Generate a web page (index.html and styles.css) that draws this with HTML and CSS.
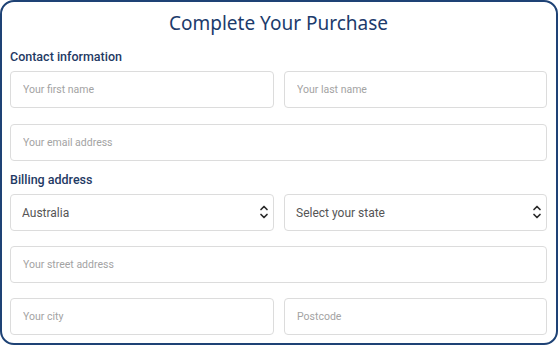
FILE: index.html
```html
<!DOCTYPE html>
<html lang="en">
<head>
    <meta charset="UTF-8">
    <meta name="viewport" content="width=device-width, initial-scale=1.0">
    <title>Complete Your Purchase</title>
    <link rel="stylesheet" href="styles.css">
</head>
<body>
    <form class="checkout-card">
        <h1 class="checkout-title">Complete Your Purchase</h1>

        <h2 class="section-label">Contact information</h2>
        <div class="field-row">
            <input class="field" type="text" placeholder="Your first name">
            <input class="field" type="text" placeholder="Your last name">
        </div>
        <div class="field-row single before-label">
            <input class="field" type="email" placeholder="Your email address">
        </div>

        <h2 class="section-label billing">Billing address</h2>
        <div class="field-row tight">
            <div class="select-wrap">
                <select class="field select">
                    <option>Australia</option>
                </select>
                <svg class="select-arrows" width="10" height="18" viewBox="0 0 10 18">
                    <path d="M2 6.5 L5 3.5 L8 6.5 M2 11.5 L5 14.5 L8 11.5" fill="none" stroke="#2b2b2b" stroke-width="1.7" stroke-linecap="round" stroke-linejoin="round"/>
                </svg>
            </div>
            <div class="select-wrap">
                <select class="field select">
                    <option>Select your state</option>
                </select>
                <svg class="select-arrows" width="10" height="18" viewBox="0 0 10 18">
                    <path d="M2 6.5 L5 3.5 L8 6.5 M2 11.5 L5 14.5 L8 11.5" fill="none" stroke="#2b2b2b" stroke-width="1.7" stroke-linecap="round" stroke-linejoin="round"/>
                </svg>
            </div>
        </div>
        <div class="field-row single tight">
            <input class="field" type="text" placeholder="Your street address">
        </div>
        <div class="field-row">
            <input class="field" type="text" placeholder="Your city">
            <input class="field" type="text" placeholder="Postcode">
        </div>
    </form>
</body>
</html>
```

FILE: styles.css
```css
* {
    box-sizing: border-box;
}
body {
    margin: 0;
    background: #fff;
    font-family: Roboto, "Liberation Sans", Arial, sans-serif;
}
.checkout-card {
    width: 558px;
    height: 345px;
    border: 2px solid #1e4275;
    border-radius: 14px;
    padding: 9px 9px 0 8px;
    background: #fff;
}
.checkout-title {
    margin: 0;
    font-family: "Noto Sans", "Open Sans", sans-serif;
    font-weight: 400;
    font-size: 19px;
    line-height: 24px;
    color: #1c3b6c;
    text-align: center;
}
.section-label {
    margin: 14px 0 6px;
    font-size: 12.5px;
    font-weight: 500;
    line-height: 16px;
    color: #1f3a64;
}
.section-label.billing {
    margin-top: 0;
}
.field-row {
    display: grid;
    grid-template-columns: 264px 263px;
    column-gap: 10px;
    margin-bottom: 16px;
}
.field-row.single {
    grid-template-columns: 1fr;
}
.field-row.tight {
    margin-bottom: 15px;
}
.field-row.before-label {
    margin-bottom: 11px;
}
.field {
    width: 100%;
    height: 37px;
    margin: 0;
    padding: 0 12px;
    border: 1px solid #dcdcdc;
    border-radius: 4px;
    background: #fff;
    font-family: Roboto, "Liberation Sans", Arial, sans-serif;
    font-size: 10.5px;
    color: #555;
    outline: none;
}
.field::placeholder {
    color: #a3a3a3;
}
.select-wrap {
    position: relative;
}
.select {
    appearance: none;
    -webkit-appearance: none;
    padding-left: 11px;
    font-size: 12px;
    color: #555;
}
.select-arrows {
    position: absolute;
    right: 5px;
    top: 9px;
    pointer-events: none;
}
```
